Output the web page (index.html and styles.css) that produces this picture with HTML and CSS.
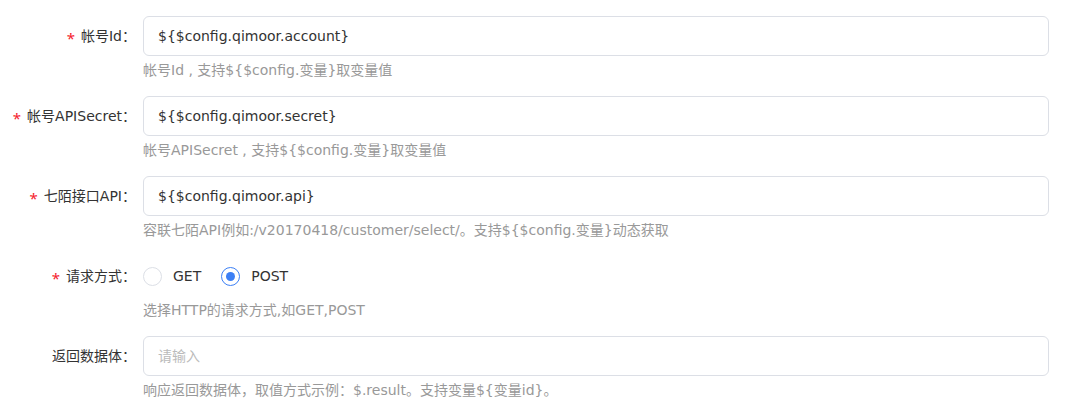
FILE: index.html
```html
<!DOCTYPE html>
<html lang="zh-CN">
<head>
  <meta charset="UTF-8" />
  <meta name="viewport" content="width=device-width, initial-scale=1.0"/>
  <title>七陌配置</title>
  <link rel="stylesheet" href="styles.css">
</head>
<body>

  <form class="form">
    <div class="form-item">
      <label class="form-label required">帐号Id：</label>
      <div class="form-control">
        <input type="text" class="input" value="${$config.qimoor.account}">
        <div class="help">帐号Id , 支持${$config.变量}取变量值</div>
      </div>
    </div>

    <div class="form-item">
      <label class="form-label required">帐号APISecret：</label>
      <div class="form-control">
        <input type="text" class="input" value="${$config.qimoor.secret}">
        <div class="help">帐号APISecret , 支持${$config.变量}取变量值</div>
      </div>
    </div>

    <div class="form-item">
      <label class="form-label required">七陌接口API：</label>
      <div class="form-control">
        <input type="text" class="input" value="${$config.qimoor.api}">
        <div class="help">容联七陌API例如:/v20170418/customer/select/。支持${$config.变量}动态获取</div>
      </div>
    </div>

    <div class="form-item">
      <label class="form-label required">请求方式：</label>
      <div class="form-control">
        <div class="radio-group">
          <label class="radio"><span class="radio-dot"></span>GET</label>
          <label class="radio checked"><span class="radio-dot"></span>POST</label>
        </div>
        <div class="help">选择HTTP的请求方式,如GET,POST</div>
      </div>
    </div>

    <div class="form-item">
      <label class="form-label">返回数据体：</label>
      <div class="form-control">
        <input type="text" class="input" placeholder="请输入">
        <div class="help">响应返回数据体，取值方式示例：$.result。支持变量${变量id}。</div>
      </div>
    </div>
  </form>

</body>
</html>
```

FILE: styles.css
```css
* {
  box-sizing: border-box;
}

body {
  margin: 0;
  background: #fff;
  font-family: "DejaVu Sans", "Noto Sans CJK SC", sans-serif;
  font-size: 14px;
  color: #333;
}

.form {
  padding: 16px 37px 0 0;
}

.form-item {
  display: flex;
  margin-bottom: 16px;
}

.form-label {
  width: 143px;
  flex-shrink: 0;
  padding-right: 7px;
  text-align: right;
  line-height: 40px;
  color: #333;
  white-space: nowrap;
}

.form-label.required::before {
  content: "*";
  font-family: "Noto Sans", sans-serif;
  font-size: 15px;
  color: #f5222d;
  margin-right: 6px;
  vertical-align: -3px;
}

.form-control {
  flex: 1;
}

.input {
  display: block;
  width: 100%;
  height: 40px;
  padding: 0 14px;
  border: 1px solid #dcdfe6;
  border-radius: 6px;
  font-family: inherit;
  font-size: 14px;
  color: #333;
  outline: none;
}

.input::placeholder {
  color: #bbb;
}

.help {
  padding-top: 4px;
  line-height: 20px;
  font-size: 14px;
  color: #999;
}

.radio-group {
  display: flex;
  align-items: center;
  height: 40px;
}

.radio {
  display: flex;
  align-items: center;
  margin-right: 20px;
}

.radio-dot {
  width: 19px;
  height: 19px;
  margin-right: 11px;
  border: 1px solid #dcdfe6;
  border-radius: 50%;
  background: #fff;
  position: relative;
}

.radio.checked .radio-dot {
  border-color: #3c7ff5;
}

.radio.checked .radio-dot::after {
  content: "";
  position: absolute;
  left: 4px;
  top: 4px;
  width: 9px;
  height: 9px;
  border-radius: 50%;
  background: #3c7ff5;
}
```
